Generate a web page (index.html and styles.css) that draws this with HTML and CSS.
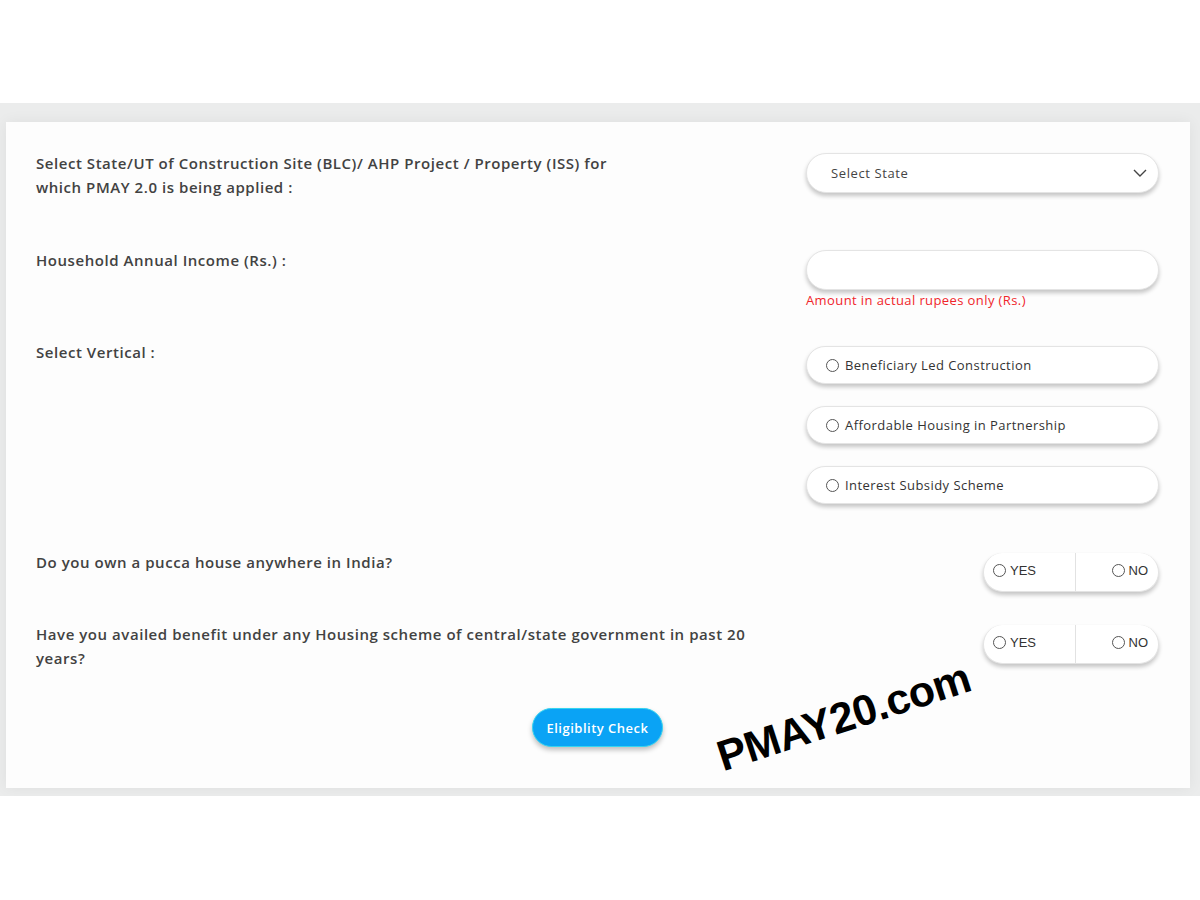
FILE: index.html
```html
<!DOCTYPE html>
<html lang="en">
<head>
<meta charset="utf-8">
<title>PMAY 2.0 Eligibility</title>
<link rel="stylesheet" href="styles.css">
</head>
<body>
<div class="top"></div>
<div class="band">
  <form class="card">
    <div class="row r1">
      <div class="label">Select State/UT of Construction Site (BLC)/ AHP Project / Property (ISS) for<br>which PMAY 2.0 is being applied :</div>
      <div class="control">
        <div class="pill select">
          <span>Select State</span>
          <svg class="chev" width="14" height="8" viewBox="0 0 14 8"><path d="M1 1l6 6 6-6" fill="none" stroke="#444" stroke-width="1.4"/></svg>
        </div>
      </div>
    </div>
    <div class="row r2">
      <div class="label">Household Annual Income (Rs.) :</div>
      <div class="control">
        <div class="pill input"></div>
        <div class="hint">Amount in actual rupees only (Rs.)</div>
      </div>
    </div>
    <div class="row r3">
      <div class="label">Select Vertical :</div>
      <div class="control opts">
        <div class="pill opt"><span class="radio"></span>Beneficiary Led Construction</div>
        <div class="pill opt"><span class="radio"></span>Affordable Housing in Partnership</div>
        <div class="pill opt"><span class="radio"></span>Interest Subsidy Scheme</div>
      </div>
    </div>
    <div class="row r4">
      <div class="label">Do you own a pucca house anywhere in India?</div>
      <div class="control">
        <div class="pill yn">
          <div class="yes"><span class="radio"></span>YES</div>
          <div class="no"><span class="radio"></span>NO</div>
        </div>
      </div>
    </div>
    <div class="row r5">
      <div class="label wide">Have you availed benefit under any Housing scheme of central/state government in past 20<br>years?</div>
      <div class="control">
        <div class="pill yn">
          <div class="yes"><span class="radio"></span>YES</div>
          <div class="no"><span class="radio"></span>NO</div>
        </div>
      </div>
    </div>
    <div class="actions">
      <button type="button" class="btn">Eligiblity Check</button>
    </div>
    <div class="watermark">PMAY20.com</div>
  </form>
</div>
</body>
</html>
```

FILE: styles.css
```css
html, body {
  margin: 0;
  padding: 0;
  background: #ffffff;
}
body {
  font-family: "Open Sans", "Liberation Sans", sans-serif;
  color: #444;
}
.top {
  height: 103px;
}
.band {
  background: #ebecec;
  padding: 19px 10px 8px 6px;
}
.card {
  position: relative;
  background: #fdfdfd;
  box-shadow: 0 0 14px rgba(0, 0, 0, 0.06);
  padding: 29px 31px 41px 30px;
  height: 596px;
}
.row {
  display: flex;
  justify-content: space-between;
  align-items: flex-start;
}
.label {
  font-size: 15px;
  font-weight: 600;
  line-height: 24px;
  color: #424242;
  letter-spacing: 0.55px;
}
.control {
  width: 353px;
  flex: none;
}
.pill {
  background: #fff;
  border-radius: 20px;
  border: 1px solid #e4e4e4;
  box-shadow: 0 3px 4px rgba(0, 0, 0, 0.22);
  box-sizing: border-box;
}
.r1 .control { margin-top: 2px; }
.select {
  height: 40px;
  display: flex;
  align-items: center;
  justify-content: space-between;
  padding: 0 11px 0 24px;
  font-size: 13px;
  letter-spacing: 0.6px;
  color: #444;
}
.r2 { margin-top: 49px; }
.r2 .control { margin-top: 2px; }
.input { height: 40px; }
.hint {
  color: #f0252b;
  font-size: 13px;
  letter-spacing: 0.4px;
  line-height: 20px;
}
.r3 { margin-top: 30px; }
.opts {
  margin-top: 6px;
  display: flex;
  flex-direction: column;
  gap: 22px;
}
.opt {
  height: 38px;
  display: flex;
  align-items: center;
  padding-left: 19px;
  font-size: 13px;
  letter-spacing: 0.45px;
  color: #333;
}
.radio {
  width: 11px;
  height: 11px;
  border: 1px solid #555;
  border-radius: 50%;
  flex: none;
  margin-right: 6px;
  background: #fff;
}
.r4 { margin-top: 46px; }
.r4 .control, .r5 .control {
  width: 176px;
  margin-top: 3px;
}
.r5 { margin-top: 30px; }
.yn {
  height: 39px;
  display: flex;
  font-family: "Liberation Sans", Arial, sans-serif;
  font-size: 13px;
  color: #333;
  border-top: none;
}
.yn > div {
  display: flex;
  align-items: center;
  height: 100%;
  padding-bottom: 4px;
  box-sizing: border-box;
}
.yes {
  width: 92px;
  padding-left: 9px;
  border-right: 1px solid #e2e2e2;
}
.no {
  flex: 1;
  justify-content: flex-end;
  padding-right: 10px;
}
.yn .radio { margin-right: 4px; }
.actions {
  margin-top: 38px;
  display: flex;
  justify-content: center;
}
.btn {
  width: 131px;
  height: 39px;
  border-radius: 20px;
  border: 1px solid #35d4f0;
  background: #0aa3f5;
  color: #fff;
  font-family: "Open Sans", "Liberation Sans", sans-serif;
  font-size: 13px;
  font-weight: 600;
  letter-spacing: 0.5px;
  box-shadow: 0 3px 5px rgba(0, 0, 0, 0.25);
  cursor: pointer;
}
.watermark {
  position: absolute;
  left: 720px;
  top: 610px;
  font-family: "Liberation Sans", Arial, sans-serif;
  font-weight: 700;
  font-size: 43px;
  letter-spacing: -0.5px;
  color: #000;
  transform: rotate(-18deg);
  transform-origin: left bottom;
  white-space: nowrap;
}
```
